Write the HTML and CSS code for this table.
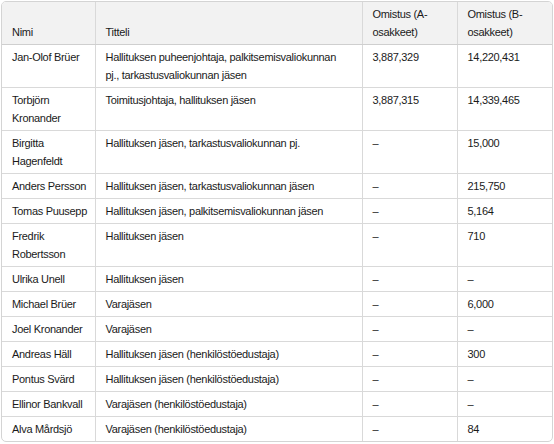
FILE: index.html
```html
<!DOCTYPE html>
<html lang="fi">
<head>
<meta charset="utf-8">
<link rel="stylesheet" href="styles.css">
</head>
<body>
<div class="wrap">
<table class="board">
<colgroup>
<col class="c-name"><col class="c-title"><col class="c-a"><col class="c-b">
</colgroup>
<thead>
<tr><th>Nimi</th><th>Titteli</th><th>Omistus (A-osakkeet)</th><th>Omistus (B-osakkeet)</th></tr>
</thead>
<tbody>
<tr><td>Jan-Olof Brüer</td><td>Hallituksen puheenjohtaja, palkitsemisvaliokunnan pj., tarkastusvaliokunnan jäsen</td><td>3,887,329</td><td>14,220,431</td></tr>
<tr><td>Torbjörn Kronander</td><td>Toimitusjohtaja, hallituksen jäsen</td><td>3,887,315</td><td>14,339,465</td></tr>
<tr><td>Birgitta Hagenfeldt</td><td>Hallituksen jäsen, tarkastusvaliokunnan pj.</td><td>–</td><td>15,000</td></tr>
<tr><td>Anders Persson</td><td>Hallituksen jäsen, tarkastusvaliokunnan jäsen</td><td>–</td><td>215,750</td></tr>
<tr><td>Tomas Puusepp</td><td>Hallituksen jäsen, palkitsemisvaliokunnan jäsen</td><td>–</td><td>5,164</td></tr>
<tr><td>Fredrik Robertsson</td><td>Hallituksen jäsen</td><td>–</td><td>710</td></tr>
<tr><td>Ulrika Unell</td><td>Hallituksen jäsen</td><td>–</td><td>–</td></tr>
<tr><td>Michael Brüer</td><td>Varajäsen</td><td>–</td><td>6,000</td></tr>
<tr><td>Joel Kronander</td><td>Varajäsen</td><td>–</td><td>–</td></tr>
<tr><td>Andreas Häll</td><td>Hallituksen jäsen (henkilöstöedustaja)</td><td>–</td><td>300</td></tr>
<tr><td>Pontus Svärd</td><td>Hallituksen jäsen (henkilöstöedustaja)</td><td>–</td><td>–</td></tr>
<tr><td>Ellinor Bankvall</td><td>Varajäsen (henkilöstöedustaja)</td><td>–</td><td>–</td></tr>
<tr><td>Alva Mårdsjö</td><td>Varajäsen (henkilöstöedustaja)</td><td>–</td><td>84</td></tr>
</tbody>
</table>
</div>
</body>
</html>
```
FILE: styles.css
```css
html, body { margin: 0; padding: 0; background: #fff; }
body {
  padding: 1px;
  font-family: "Liberation Sans", Arial, sans-serif;
  font-size: 11px;
  letter-spacing: -0.3px;
  color: #1a1a1a;
}
.wrap {
  width: 550px;
  border: 1px solid #d4d4d4;
  border-radius: 5px;
  overflow: hidden;
}
.board {
  width: 550px;
  table-layout: fixed;
  border-collapse: collapse;
}
.c-name { width: 93px; }
.c-title { width: 267px; }
.c-a { width: 95px; }
.c-b { width: 95px; }
th, td {
  padding: 3px 5px 3px 10px;
  line-height: 18px;
  text-align: left;
  vertical-align: top;
  border-right: 1px solid #d9d9d9;
  border-bottom: 1px solid #d9d9d9;
}
th:nth-child(2), td:nth-child(2) { padding-right: 16px; }
th:last-child, td:last-child { border-right: 0; }
tbody tr:last-child td { border-bottom: 0; }
th {
  background: #f2f2f2;
  font-weight: normal;
  vertical-align: bottom;
  border-bottom-color: #cfcfcf;
}
```
